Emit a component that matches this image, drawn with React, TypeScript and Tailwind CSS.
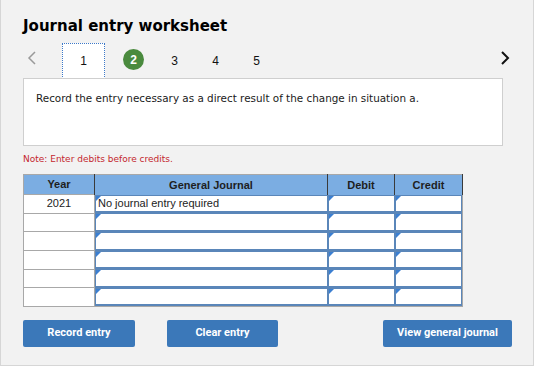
import React from "react";

const rows = [
  { year: "2021", entry: "No journal entry required" },
  { year: "", entry: "" },
  { year: "", entry: "" },
  { year: "", entry: "" },
  { year: "", entry: "" },
  { year: "", entry: "" },
];

const InputCell = ({ text }: { text?: string }) => (
  <div className="relative h-full w-full border border-b-2 border-[#5a86b9] bg-white pl-[2px] text-[11px] leading-[15px] text-[#222]">
    <span className="absolute left-0 top-0 h-0 w-0 border-r-[5px] border-t-[5px] border-r-transparent border-t-[#3b7fd1]" />
    {text}
  </div>
);

export default function App() {
  return (
    <div className="h-[374px] w-[560px] bg-white">
      <div className="flex h-[366px] w-[534px] flex-col border-x border-b border-[#d6d6d6] bg-[#f2f2f2] pl-[22px] font-['DejaVu_Sans',sans-serif]">
        <h1 className="pt-[16px] text-[15px] font-bold leading-[20px] text-black">Journal entry worksheet</h1>

        <div className="mt-[7px] flex h-[35px] items-start text-[11px] text-[#111]">
          <svg width="12" height="36" viewBox="0 0 12 36" className="ml-[3px]">
            <path d="M9 9 L3 15 L9 21" fill="none" stroke="#9a9a9a" strokeWidth="1.5" />
          </svg>
          <div className="ml-[24px] flex h-[36px] w-[43px] items-center justify-center border border-dotted border-[#3c78c8] bg-white font-['Liberation_Sans',sans-serif] text-[12px]">
            1
          </div>
          <div className="ml-[18px] mt-[6px] flex h-[21px] w-[21px] items-center justify-center rounded-full bg-[#4a8a3e] font-['Liberation_Sans',sans-serif] text-[12px] font-bold text-white">
            2
          </div>
          <div className="ml-[10px] flex w-[125px] pt-[9px] font-['Liberation_Sans',sans-serif] text-[12px]">
            <span className="w-[41px] text-center">3</span>
            <span className="w-[41px] text-center">4</span>
            <span className="w-[41px] text-center">5</span>
          </div>
          <svg width="12" height="36" viewBox="0 0 12 36" className="ml-[220px]">
            <path d="M3 9 L9 15 L3 21" fill="none" stroke="#111" strokeWidth="2" />
          </svg>
        </div>

        <div className="h-[68px] w-[480px] border border-[#cfcfcf] bg-white px-[12px] pt-[12px] text-[10.4px] leading-[14px] text-[#1a1a1a]">
          Record the entry necessary as a direct result of the change in situation a.
        </div>

        <p className="mt-[6px] text-[9px] leading-[14px] text-[#c4262e]">Note: Enter debits before credits.</p>

        <table className="mt-[8px] w-[440px] table-fixed border-collapse border border-[#a8a8a8] font-['Liberation_Sans',sans-serif]">
          <colgroup>
            <col className="w-[71px]" />
            <col className="w-[233px]" />
            <col className="w-[67px]" />
            <col className="w-[68px]" />
          </colgroup>
          <thead>
            <tr className="h-[20px] bg-[#7badE2] text-[11px] font-bold text-[#1e1e1e]">
              <th className="border-r border-[#3a3a3a] p-0">Year</th>
              <th className="border-r border-[#3a3a3a] p-0">General Journal</th>
              <th className="border-r border-[#3a3a3a] p-0">Debit</th>
              <th className="border-r border-[#3a3a3a] p-0">Credit</th>
            </tr>
          </thead>
          <tbody>
            {rows.map((r, i) => (
              <tr key={i} className="h-[18.7px]">
                <td className="border border-[#a8a8a8] bg-white p-0 text-center text-[11px] leading-[15px] text-[#222]">{r.year}</td>
                <td className="h-[18.7px] p-0">
                  <InputCell text={r.entry} />
                </td>
                <td className="h-[18.7px] p-0">
                  <InputCell />
                </td>
                <td className="h-[18.7px] p-0">
                  <InputCell />
                </td>
              </tr>
            ))}
          </tbody>
        </table>

        <div className="mt-[13px] flex font-['Roboto',sans-serif] text-[11px] font-bold text-white">
          <button className="h-[27px] w-[112px] rounded-[2px] bg-[#3b78b9]">Record entry</button>
          <button className="ml-[32px] h-[27px] w-[111px] rounded-[2px] bg-[#3b78b9]">Clear entry</button>
          <button className="ml-[105px] h-[27px] w-[129px] rounded-[2px] bg-[#3b78b9]">View general journal</button>
        </div>
      </div>
    </div>
  );
}
